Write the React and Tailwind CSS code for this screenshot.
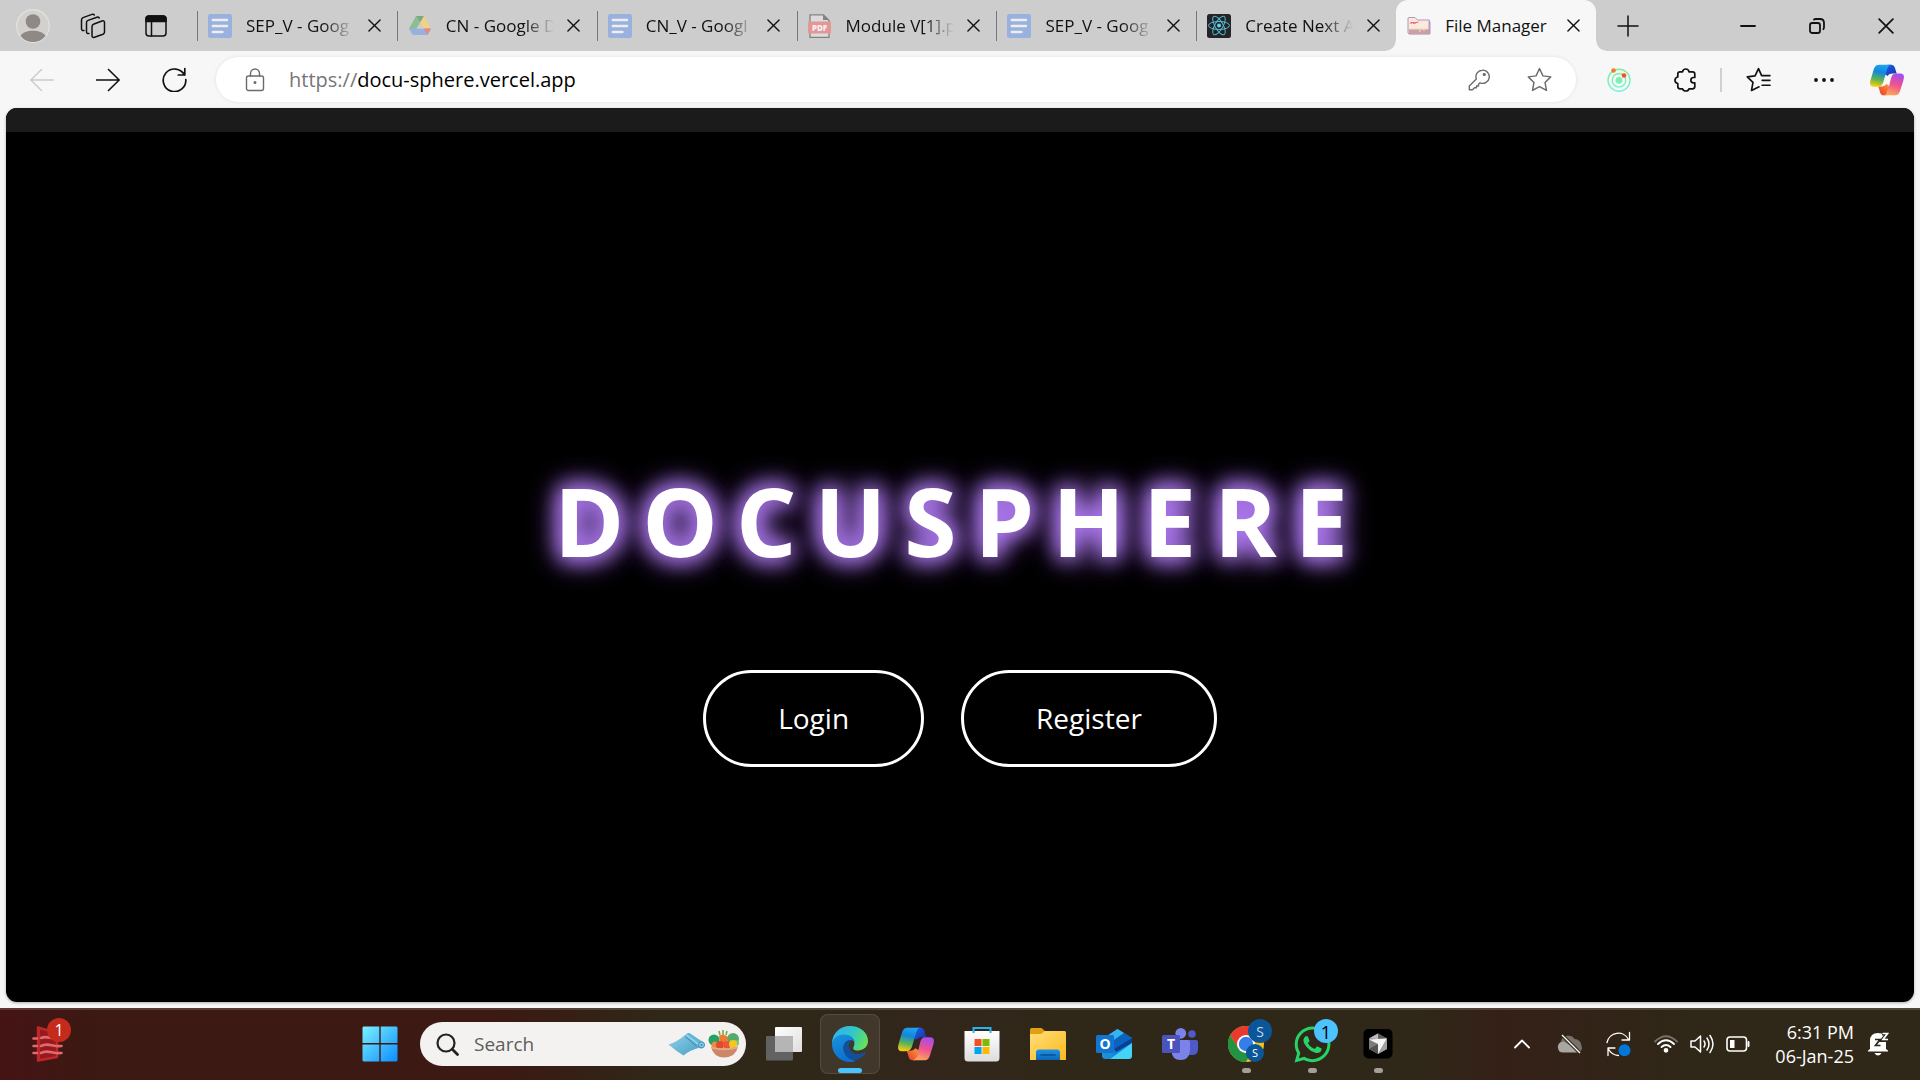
import React from "react";
import { FaWhatsapp } from "react-icons/fa";

const stroke = { fill: "none", stroke: "currentColor", strokeLinecap: "round", strokeLinejoin: "round" };

function DocsIcon() {
  return (
    <svg viewBox="0 0 24 24" className="size-6 shrink-0">
      <rect width="24" height="24" rx="2.5" fill="#98b1de" />
      <path d="M4.8 6H19M4.8 12H19M4.8 18H14.5" stroke="#eeeeee" strokeWidth="2.4" strokeLinecap="round" />
    </svg>
  );
}

function DriveIcon() {
  return (
    <svg viewBox="0 0 24 24" className="size-6 shrink-0">
      <path d="M8 2h8l-4 7-5.500 10H4.600L1 14.500Z" fill="#8ebd94" />
      <path d="M8 2h8l7 12.500h-7.500L12 8.500Z" fill="#f1d283" />
      <path d="M8 2h8l-4 6.500Z" fill="#79a985" />
      <path d="M1 14.500h22L19.600 21H4.600Z" fill="#98b1de" />
      <path d="M15.500 14.500H23L19.600 21Z" fill="#dd8d87" />
      <path d="M12 8.500l3.700 6H8.500Z" fill="#cdcdcd" />
    </svg>
  );
}

function PdfIcon() {
  return (
    <svg viewBox="0 0 24 24" className="size-6 shrink-0">
      <path d="M2 .8h13.500L21 6.500V23.300H2Z" fill="#dcdcdc" stroke="#828282" strokeWidth="1.300" />
      <path d="M15 .8V6h6Z" fill="#828282" />
      <rect x="0" y="7.500" width="23" height="12" rx="1" fill="#e49696" />
      <text x="11.500" y="16.500" textAnchor="middle" fontSize="8" fontWeight="800" fontFamily="Open Sans, sans-serif" fill="#f6f0f0">PDF</text>
    </svg>
  );
}

function ReactIcon() {
  return (
    <svg viewBox="0 0 24 24" className="size-6 shrink-0">
      <rect width="24" height="24" rx="2.500" fill="#222426" />
      <g fill="none" stroke="#58b9d4" strokeWidth="1">
        <ellipse cx="12" cy="11.500" rx="10.500" ry="4" />
        <ellipse cx="12" cy="11.500" rx="10.500" ry="4" transform="rotate(60 12 11.500)" />
        <ellipse cx="12" cy="11.500" rx="10.500" ry="4" transform="rotate(120 12 11.500)" />
      </g>
      <circle cx="12" cy="11.500" r="2" fill="#5fd3f3" />
    </svg>
  );
}

function FolderFavicon() {
  return (
    <svg viewBox="0 0 24 24" className="size-6 shrink-0">
      <path d="M1 19V4.500Q1 3.500 2 3.500H8L10.500 6H22.500V20H2Z" fill="#fbeadb" stroke="#b294c0" strokeWidth="1" />
      <path d="M1.500 15.500H23V20.300H2Z" fill="#c9a0a8" />
      <path d="M21.500 7V20H23.500V8Z" fill="#b79abf" />
      <path d="M1.500 15.300H21.500" stroke="#d9bd9f" />
      <path d="M4 10V8.500H6.500V10M8 10V8.500H9.500L11.500 8" fill="none" stroke="#f0627a" strokeWidth="1.200" />
      <path d="M13 15v3M17 15v2" stroke="#f5dfd2" />
    </svg>
  );
}

const tabs = [
  { title: "SEP_V - Goog", Icon: DocsIcon },
  { title: "CN - Google D", Icon: DriveIcon },
  { title: "CN_V - Googl", Icon: DocsIcon },
  { title: "Module V[1].p", Icon: PdfIcon },
  { title: "SEP_V - Goog", Icon: DocsIcon },
  { title: "Create Next A", Icon: ReactIcon },
  { title: "File Manager", Icon: FolderFavicon, active: true },
];

function Cross({ className }) {
  return (
    <svg viewBox="0 0 14 14" className={className} {...stroke} strokeWidth="1.500">
      <path d="M1 1 13 13M13 1 1 13" />
    </svg>
  );
}

function Tab({ title, Icon, active }) {
  return (
    <div
      className={
        active
          ? "relative flex h-full min-w-0 flex-1 items-center rounded-t-xl bg-[#f7f7f7] pl-[11px]"
          : "relative flex h-full min-w-0 flex-1 items-center pl-[11px]"
      }
    >
      {active ? (
        <>
          <span className="absolute bottom-0 -left-2.5 size-2.5 bg-[radial-gradient(circle_at_0_0,transparent_9px,#f7f7f7_10px)]" />
          <span className="absolute -right-2.5 bottom-0 size-2.5 bg-[radial-gradient(circle_at_100%_0,transparent_9px,#f7f7f7_10px)]" />
        </>
      ) : (
        <span className="absolute top-[11px] left-0 h-[30px] w-px bg-[#777]" />
      )}
      <Icon />
      <a
        href="#tab"
        className={
          active
            ? "ml-3.5 w-[108px] text-[17px] whitespace-nowrap"
            : "ml-3.5 w-[108px] text-[17px] whitespace-nowrap [mask-image:linear-gradient(to_right,black_72%,transparent)]"
        }
      >
        {title}
      </a>
      <button aria-label={"Close " + title} className="ml-2 grid size-6 shrink-0 place-items-center">
        <Cross className="size-[13px]" />
      </button>
    </div>
  );
}

function TabStrip() {
  return (
    <header className="flex h-[51px] items-center bg-[#cdcdcd] text-[#111]">
      <div className="flex w-[197px] shrink-0 items-center">
        <button aria-label="Profile" className="ml-4">
          <svg viewBox="0 0 34 34" className="size-[34px]">
            <circle cx="17" cy="17" r="16.300" fill="#d3d1ce" stroke="#e4e2df" strokeWidth="1.200" />
            <circle cx="17" cy="12.500" r="7.300" fill="#8e8985" />
            <path d="M4.500 27C8 20 26 20 29.500 27A16 16 0 0 1 4.500 27Z" fill="#8e8985" />
          </svg>
        </button>
        <button aria-label="Workspaces" className="ml-[30px]">
          <svg viewBox="0 0 26 26" className="size-[26px]" {...stroke} strokeWidth="1.500">
            <path d="M14 11 22 8q2.500-.7 2.500 1.500V19q0 1.500-1.500 2.200l-8.500 3q-2.500.8-2.500-1.500V13.500Q12 11.700 14 11" />
            <path d="M9 20.500Q6.500 21 6.500 18.500V9.500Q6.500 8 8 7.400L17 4.200q1.500-.4 2.200.8" />
            <path d="M4 17.500Q1.500 18 1.500 15.500V7Q1.500 5.300 3 4.600L12 1.400q1.500-.5 2.300.6" />
          </svg>
        </button>
        <button aria-label="Tab actions" className="ml-[39px]">
          <svg viewBox="0 0 22 22" className="size-[22px]" {...stroke} strokeWidth="1.500">
            <rect x="1" y="1" width="20" height="20" rx="3" />
            <path d="M1 6.500V4q0-3 3-3h14q3 0 3 3v2.500Z" fill="currentColor" />
            <path d="M6.500 7v14" />
          </svg>
        </button>
      </div>
      <nav aria-label="Tabs" className="flex h-full w-[1399px]">
        {tabs.map((t, i) => (
          <Tab key={i} {...t} />
        ))}
      </nav>
      <button aria-label="New tab" className="ml-5 grid size-6 shrink-0 place-items-center">
        <svg viewBox="0 0 22 22" className="size-[22px]" {...stroke} strokeWidth="1.500">
          <path d="M11 1v20M1 11h20" />
        </svg>
      </button>
      <div className="ml-auto flex">
        <button aria-label="Minimize" className="grid h-10 w-[69px] place-items-center">
          <svg viewBox="0 0 16 16" className="size-4" {...stroke} strokeWidth="1.800">
            <path d="M1 8h14" />
          </svg>
        </button>
        <button aria-label="Restore" className="grid h-10 w-[69px] place-items-center">
          <svg viewBox="0 0 16 16" className="size-4" {...stroke} strokeWidth="1.800">
            <rect x="1" y="5" width="10" height="10" rx="2.300" />
            <path d="M5 1.500Q5.500 1 7 1h4q4 0 4 4v4q0 1.500-.7 2.200" />
          </svg>
        </button>
        <button aria-label="Close window" className="grid h-10 w-[69px] place-items-center">
          <Cross className="size-4" />
        </button>
      </div>
    </header>
  );
}

function CopilotIcon({ id, className }) {
  return (
    <svg viewBox="0 0 108 101" className={className}>
      <defs>
        <linearGradient id={id + "a"} x1=".6" y1="0" x2=".4" y2="1">
          <stop offset="0" stopColor="#1ba6f2" />
          <stop offset=".35" stopColor="#1287dc" />
          <stop offset=".7" stopColor="#5fb550" />
          <stop offset="1" stopColor="#f8cb12" />
        </linearGradient>
        <linearGradient id={id + "b"} x1=".7" y1="0" x2=".4" y2="1">
          <stop offset="0" stopColor="#a24df3" />
          <stop offset=".5" stopColor="#ed5290" />
          <stop offset="1" stopColor="#ffa45a" />
        </linearGradient>
        <linearGradient id={id + "c"} x1="0" y1="0" x2="1" y2="1">
          <stop offset="0" stopColor="#1b66e6" />
          <stop offset="1" stopColor="#1a2fae" />
        </linearGradient>
        <linearGradient id={id + "d"} x1="1" y1="0" x2="0" y2="1">
          <stop offset="0" stopColor="#ff9a3c" />
          <stop offset="1" stopColor="#e8392c" />
        </linearGradient>
      </defs>
      <path d="M56 2H66C76 2 79 9 81 18L85 30H74C64 30 60 32 56 38L44 30Z" fill={"url(#" + id + "c)"} />
      <path d="M52 99H44C34 99 32 91 30 82L26 71C40 72 46 70 52 63L64 71L57 84Z" fill={"url(#" + id + "d)"} />
      <path d="M30 2H68C60 2 57 8 54 18L42 58C38 69 34 72 22 72H12C0 72 -2 64 2 50L12 16C16 6 20 2 30 2Z" fill={"url(#" + id + "a)"} />
      <path d="M84 30H96C108 30 110 38 106 52L96 84C92 96 88 99 78 99H42C50 99 54 94 57 84L67 44C70 34 74 30 84 30Z" fill={"url(#" + id + "b)"} />
    </svg>
  );
}

const star = "M12 1.500 15.300 8.500 22.800 9.500 17.300 14.800 18.700 22.500 12 18.800 5.300 22.500 6.700 14.800 1.200 9.500 8.700 8.500Z";

function Toolbar() {
  return (
    <div className="flex h-[57px] items-center bg-[#f7f7f7] text-[#111]">
      <div className="flex w-[216px] shrink-0 items-center pl-[9px]">
        <button aria-label="Back" disabled className="grid w-[66px] place-items-center text-[#cccccc]">
          <svg viewBox="0 0 24 24" className="size-6" {...stroke} strokeWidth="1.500">
            <path d="M23.500 12H.8M11.500 1.500 .8 12l10.700 10.500" />
          </svg>
        </button>
        <button aria-label="Forward" className="grid w-[66px] place-items-center">
          <svg viewBox="0 0 24 24" className="size-6" {...stroke} strokeWidth="1.600">
            <path d="M.5 12H23.200M12.500 1.500 23.200 12 12.500 22.500" />
          </svg>
        </button>
        <button aria-label="Refresh" className="grid w-[66px] place-items-center">
          <svg viewBox="0 0 25 25" className="size-[25px]" {...stroke} strokeWidth="1.700">
            <path d="M22.500 8A11.300 11.300 0 1 0 23.800 12.500M22.800 1.500V8H16.300" />
          </svg>
        </button>
      </div>
      <div className="flex h-[45px] min-w-0 flex-1 items-center rounded-full bg-white pr-6 pl-[29px] shadow-[0_0_4px_rgba(0,0,0,0.09)]">
        <svg viewBox="0 0 20 24" className="h-6 w-5 text-[#6b6b6b]" {...stroke} strokeWidth="1.400">
          <rect x="1.500" y="8" width="17" height="14.500" rx="2" />
          <path d="M5.500 8V5.500a4.500 4.500 0 0 1 9 0V8" />
          <circle cx="10" cy="14.500" r=".8" fill="currentColor" />
        </svg>
        <label htmlFor="url" className="ml-6 text-[20px] text-[#767676]">https://</label>
        <input
          id="url"
          type="text"
          defaultValue="docu-sphere.vercel.app"
          className="min-w-0 flex-1 bg-transparent text-[20px] text-black outline-none"
        />
        <button aria-label="Passwords" className="text-[#6b6b6b]">
          <svg viewBox="0 0 22 22" className="size-[22px]" {...stroke} strokeWidth="1.400">
            <path d="M14 1.200A6.600 6.600 0 1 1 12 13.800L10.500 15.200V17H8.500V18.800H6.500L4.500 20.700H1.300V17L8.300 10A6.600 6.600 0 0 1 14 1.200Z" />
            <circle cx="16.300" cy="5.500" r=".9" fill="currentColor" />
          </svg>
        </button>
        <button aria-label="Add to favorites" className="ml-[37px] text-[#6b6b6b]">
          <svg viewBox="0 0 24 24" className="size-[25px]" {...stroke} strokeWidth="1.400"><path d={star} /></svg>
        </button>
      </div>
      <div className="flex shrink-0 items-center pr-4 pl-[31px]">
        <button aria-label="Orbit extension">
          <svg viewBox="0 0 24 24" className="size-6" fill="none">
            <defs>
              <linearGradient id="orbit" x1="0" y1="0" x2="0" y2="24" gradientUnits="userSpaceOnUse">
                <stop stopColor="#7df18d" />
                <stop offset="1" stopColor="#72f5dd" />
              </linearGradient>
            </defs>
            <circle cx="12" cy="12.300" r="11" stroke="url(#orbit)" strokeWidth="1.400" />
            <circle cx="12" cy="12.300" r="6.800" stroke="url(#orbit)" strokeWidth="1.400" />
            <circle cx="12" cy="12.300" r="3.400" fill="url(#orbit)" />
            <circle cx="6.500" cy="2.500" r="2.300" fill="#f47a31" />
            <circle cx="17" cy="7.500" r="2.300" fill="#f4502b" />
          </svg>
        </button>
        <button aria-label="Extensions" className="ml-[42px]">
          <svg viewBox="0 0 25 24" className="h-6 w-[25px]" {...stroke} strokeWidth="1.700">
            <path d="M9.500 3.800Q10 1 12.800 1T16 3.800H19.500Q21.800 3.800 21.800 6V9.500H20.500A2.600 2.600 0 0 0 20.500 14.800H21.800V18.500Q21.800 20.800 19.500 20.800H16Q15.500 23 12.800 23T9.500 20.800H7Q4.800 20.800 4.800 18.500V15.500Q2 15 2 12.300T4.800 9V6Q4.800 3.800 7 3.800Z" />
          </svg>
        </button>
        <span className="ml-[22px] h-6 w-0.5 bg-[#d0d0d0]" />
        <button aria-label="Favorites" className="ml-6">
          <svg viewBox="0 0 24 24" className="size-[25px]" {...stroke} strokeWidth="1.600">
            <path d="M12.500 19 5.300 22.500 6.700 14.800 1.200 9.500 8.700 8.500 12 1.500 15 8.300H23M15.500 12.800H23M15.500 17.500H23" />
          </svg>
        </button>
        <button aria-label="Settings and more" className="ml-[42px]">
          <svg viewBox="0 0 22 6" className="h-1.5 w-[22px]" fill="currentColor">
            <circle cx="3" cy="3" r="1.900" /><circle cx="11" cy="3" r="1.900" /><circle cx="19" cy="3" r="1.900" />
          </svg>
        </button>
        <button aria-label="Copilot" className="ml-[35px]">
          <CopilotIcon id="ct" className="h-8 w-[34px]" />
        </button>
      </div>
    </div>
  );
}

function Page() {
  return (
    <main className="mx-1.5 mb-1.5 flex min-h-0 flex-1 flex-col overflow-hidden rounded-[11px] bg-black text-white shadow-[0_1px_3px_rgba(0,0,0,0.3)]">
      <div className="h-6 shrink-0 bg-[#1b1b1b]" />
      <div className="flex flex-1 flex-col items-center justify-center pt-[88px]">
        <h1 className="text-[95px] leading-[128px] font-bold tracking-[18px] [text-shadow:0_0_20px_#b17cf3,0_0_25px_#b17cf3,0_0_32px_#a470e6,0_0_50px_rgba(168,85,247,0.2)]">
          DOCUSPHERE
        </h1>
        <div className="mt-[86px] flex gap-[37px]">
          <button className="h-[97px] rounded-full border-[3px] border-white px-[72px] text-[28px]">Login</button>
          <button className="h-[97px] rounded-full border-[3px] border-white px-[72px] text-[28px]">Register</button>
        </div>
      </div>
    </main>
  );
}

function StartIcon() {
  return (
    <svg viewBox="0 0 36 36" className="size-9">
      <defs>
        <linearGradient id="win" x1="0" y1="0" x2="36" y2="36" gradientUnits="userSpaceOnUse">
          <stop stopColor="#7cf3ff" /><stop offset=".5" stopColor="#43bfff" /><stop offset="1" stopColor="#0a8cff" />
        </linearGradient>
      </defs>
      <path d="M1.500.500H17.300V17H.500V1.500Zm17.200 0H34.500L35.500 1.500V17H18.700ZM.500 18.500H17.300V35.500H1.500L.500 34.500Zm18.200 0H35.500V34.500L34.500 35.500H18.700Z" fill="url(#win)" />
    </svg>
  );
}

function WidgetIcon() {
  return (
    <svg viewBox="0 0 32 36" className="h-9 w-8">
      <path d="M6 1.500 25 7V31L6 34.500Z" fill="#931a1d" stroke="#c0272a" strokeWidth="2.500" strokeLinejoin="round" />
      <path d="M6.500 1V35" stroke="#c0272a" strokeWidth="3" />
      <path d="M1.500 12.500H5M9 12C15 9 20 14 26 12M1.500 20H5M9 20C16 16 20 21 29.500 20M1.500 27H5M9 27C16 23 20 28 29.500 27" fill="none" stroke="#e2686d" strokeWidth="2.600" strokeLinecap="round" />
    </svg>
  );
}

function MatIcon() {
  return (
    <svg viewBox="0 0 38 24" className="h-6 w-[38px] shrink-0">
      <defs>
        <linearGradient id="mat" x1="0" y1="0" x2="1" y2="1"><stop stopColor="#8fd0e8" /><stop offset="1" stopColor="#4a9fc4" /></linearGradient>
      </defs>
      <path d="M.500 12.500Q9 10 17 3L32 15.500Q22 18 15.500 23.500Q8 19 .500 12.500Z" fill="url(#mat)" />
      <path d="M17 3.500Q18 .500 21.500 1L35 10Q38 13 35 16Q32 17.500 30 15Z" fill="#62b4d6" />
      <path d="M18 2.500 31.500 13" stroke="#9bd8ec" strokeWidth="1.500" />
      <path d="M17 4.500 29 14.500" stroke="#3c8bb0" strokeWidth="1" />
      <circle cx="33.500" cy="12.800" r="3" fill="#8ccbe4" stroke="#3d8fb5" />
      <circle cx="33.500" cy="12.800" r=".9" fill="#2f7899" />
    </svg>
  );
}

function BasketIcon() {
  return (
    <svg viewBox="0 0 32 28" className="ml-0.5 h-7 w-8 shrink-0">
      <circle cx="6" cy="10" r="5.500" fill="#21a366" />
      <circle cx="25" cy="9" r="6" fill="#55ab6b" />
      <circle cx="28" cy="13" r="3" fill="#7cc17e" />
      <path d="M11 6Q15 3 20 7L18 15H12Z" fill="#ef7a30" />
      <path d="M12 5 11 1M15 5V0M18 5 19 1" stroke="#7aa844" strokeWidth="1.600" />
      <circle cx="7" cy="15" r="3.500" fill="#f08a3d" />
      <circle cx="12" cy="15" r="4" fill="#e14b32" />
      <circle cx="19" cy="15" r="4" fill="#ea5736" />
      <circle cx="25" cy="14" r="4" fill="#f3c81e" />
      <path d="M3 16.500Q16 20.500 30 16.500Q28 27 16 27.500Q5 27 3 16.500Z" fill="#cb8766" />
      <path d="M3 16.500Q16 20.500 30 16.500L29.500 18.500Q16 22 3.500 18.500Z" fill="#e5ab89" />
    </svg>
  );
}

function TaskViewIcon() {
  return (
    <svg viewBox="0 0 36 36" className="size-9">
      <defs>
        <linearGradient id="tv" x1="0" y1="0" x2="1" y2="1"><stop stopColor="#fff" /><stop offset="1" stopColor="#dedede" /></linearGradient>
      </defs>
      <rect x="9" y="1" width="27" height="25" rx="1" fill="url(#tv)" />
      <rect y="10" width="27" height="24.500" rx="1" fill="#626262" />
      <rect x="9" y="10" width="18" height="16" fill="#b5b5b5" />
    </svg>
  );
}

function EdgeIcon() {
  return (
    <svg viewBox="0 0 36 36" className="size-9">
      <defs>
        <linearGradient id="e1" x1="0" y1="4" x2="36" y2="20" gradientUnits="userSpaceOnUse">
          <stop stopColor="#2fb2f3" /><stop offset=".5" stopColor="#31c6c9" /><stop offset="1" stopColor="#6de64a" />
        </linearGradient>
        <linearGradient id="e2" x1="0" y1="10" x2="10" y2="36" gradientUnits="userSpaceOnUse">
          <stop stopColor="#1793dd" /><stop offset="1" stopColor="#0c6fcf" />
        </linearGradient>
      </defs>
      <path d="M0 18C0 7 8 0 18 0C29 0 36 7 36 15C36 21 31 24.500 26 24.500C22 24.500 20.500 23 21.500 21C24 18 22 9 12 9C5 9 1 13 0 18Z" fill="url(#e1)" />
      <path d="M0 18C1 12 6 8.500 12 8.500C18 8.500 22 12 23 16C21 14 18 13.500 15 15C10 18 10 27 17 32C20 34 23 35 25 34.500C22 35.700 20 36 18 36C8 36 0 28 0 18Z" fill="url(#e2)" />
      <path d="M17 14.300C10 17 9.500 26 15.500 31C21 36 28 34 33.500 27.500C34 26.500 33.500 26 32.500 26.500C25 30 17 27 17 20C17 17 18 15 20 14.300Q18.500 13.800 17 14.300Z" fill="#10509c" />
    </svg>
  );
}

function StoreIcon() {
  return (
    <svg viewBox="0 0 36 36" className="size-9">
      <defs><linearGradient id="st" x1="0" y1="0" x2="0" y2="1"><stop stopColor="#fff" /><stop offset="1" stopColor="#dcdcdc" /></linearGradient></defs>
      <path d="M.500 5H35.500V32Q35.500 35.500 32 35.500H4Q.500 35.500 .500 32Z" fill="url(#st)" />
      <path d="M9.500 7V2H26.500V7" fill="none" stroke="#27b3ee" strokeWidth="2" />
      <path d="M10.500 13h7v7h-7Z" fill="#f25022" /><path d="M18.500 13h7v7h-7Z" fill="#7fba00" />
      <path d="M10.500 21h7v7h-7Z" fill="#00a4ef" /><path d="M18.500 21h7v7h-7Z" fill="#ffb900" />
    </svg>
  );
}

function ExplorerIcon() {
  return (
    <svg viewBox="0 0 36 36" className="size-9">
      <defs>
        <linearGradient id="ex" x1="0" y1="0" x2="1" y2="1"><stop stopColor="#ffde7a" /><stop offset="1" stopColor="#fbb91c" /></linearGradient>
        <linearGradient id="ex2" x1="0" y1="0" x2="0" y2="1"><stop stopColor="#1f93e4" /><stop offset="1" stopColor="#0c66b8" /></linearGradient>
      </defs>
      <path d="M0 3.500Q0 2 1.500 2H11.500L15 5V10H0Z" fill="#e0a012" />
      <path d="M0 8H11L15 5H34.500Q36 5 36 6.500V34H0Z" fill="url(#ex)" />
      <path d="M6 34V26.500Q6 23.500 9 23.500H27Q30 23.500 30 26.500V34Z" fill="url(#ex2)" />
      <path d="M11 29H25" stroke="#0b4f94" strokeWidth="1.600" strokeLinecap="round" />
    </svg>
  );
}

function OutlookIcon() {
  return (
    <svg viewBox="0 0 36 36" className="size-9">
      <path d="M6 13 21.500 3 36 12V29.500Q36 33 32.500 33H10Q6 33 6 29.500Z" fill="#1683d8" />
      <path d="M8 12 21.500 3 28 7 14 17Z" fill="#35b4ef" />
      <path d="M28 7 36 12 18 23V14Z" fill="#0b63bf" />
      <path d="M36 12V17L20 26 18 23Z" fill="#083f91" />
      <path d="M36 17V29.500Q36 33 32.500 33H14Z" fill="#43d3f7" />
      <path d="M6 25 18 28 14 33H10Q6 33 6 29Z" fill="#1d8ed9" />
      <rect y="9" width="18" height="18" rx="1.500" fill="#1175d1" />
      <text x="9" y="23" textAnchor="middle" fontSize="14" fontWeight="700" fontFamily="Open Sans, sans-serif" fill="#fff">O</text>
    </svg>
  );
}

function TeamsIcon() {
  return (
    <svg viewBox="0 0 36 36" className="size-9">
      <circle cx="30" cy="8" r="3.800" fill="#5059c9" />
      <path d="M24 14H34Q36 14 36 16V23Q36 29 30 29H24Z" fill="#5059c9" />
      <circle cx="18.800" cy="7.300" r="5.400" fill="#7b83eb" />
      <path d="M10 14H26Q28 14 28 16V25Q27 34 18.500 34T9.500 25Z" fill="#7b83eb" />
      <rect y="9" width="18" height="18" rx="1.500" fill="#4b53bc" />
      <text x="9" y="23" textAnchor="middle" fontSize="14" fontWeight="700" fontFamily="Open Sans, sans-serif" fill="#fff">T</text>
    </svg>
  );
}

function ChromeIcon() {
  return (
    <svg viewBox="0 0 36 36" className="size-9">
      <circle cx="18" cy="18" r="18" fill="#fbc116" />
      <path d="M2.400 9A18 18 0 0 0 18 36L25.500 22.500 18 18 10.500 22.500Z" fill="#229342" />
      <path d="M2.400 9 10.500 22.500 18 9.500H33.900L33.600 9A18 18 0 0 0 2.400 9Z" fill="#e83b2e" />
      <circle cx="18" cy="18" r="9" fill="#fff" />
      <circle cx="18" cy="18" r="7.200" fill="#357ee9" />
    </svg>
  );
}

function CursorIcon() {
  return (
    <svg viewBox="0 0 36 36" className="size-9">
      <rect x="3.500" y="3" width="29" height="29.500" rx="5" fill="#000" />
      <path d="M18 7.500 27 12.500V23L18 28 9 23V12.500Z" fill="#7d7d7d" />
      <path d="M18 7.500 27 12.500H9Z" fill="#5d5d5d" />
      <path d="M9 13.500 27 12.500 18 28V18Z" fill="#f4f4f4" />
      <path d="M27 12.500V23L18 28Z" fill="#a0a0a0" />
      <path d="M9 23 18 18V28Z" fill="#555555" />
      <path d="M18 7.500V13L9 12.500Z" fill="#bdbdbd" />
    </svg>
  );
}

const apps = [
  { name: "Task view", icon: <TaskViewIcon /> },
  { name: "Microsoft Edge", icon: <EdgeIcon />, active: true },
  { name: "Copilot app", icon: <CopilotIcon id="cb" className="h-[34px] w-9" /> },
  { name: "Microsoft Store", icon: <StoreIcon /> },
  { name: "File Explorer", icon: <ExplorerIcon /> },
  { name: "Outlook", icon: <OutlookIcon /> },
  { name: "Teams", icon: <TeamsIcon /> },
  { name: "Chrome", icon: <ChromeIcon />, running: true, profile: "S" },
  { name: "WhatsApp", icon: <FaWhatsapp className="size-[41px] text-[#25d366]" />, running: true, count: "1" },
  { name: "Cursor", icon: <CursorIcon />, running: true },
];

function AppButton({ name, icon, active, running, profile, count }) {
  return (
    <button
      aria-label={name}
      className={
        active
          ? "relative grid size-[60px] place-items-center rounded-lg border border-white/10 bg-white/8"
          : "relative grid size-[60px] place-items-center"
      }
    >
      {icon}
      {active && <span className="absolute bottom-0 h-[5px] w-6 rounded-full bg-[#4cc2ff]" />}
      {running && <span className="absolute bottom-px h-[5px] w-[9px] rounded-full bg-[#a39e97]" />}
      {profile && (
        <>
          <span className="absolute top-[5px] right-1 grid size-6 place-items-center rounded-full bg-[#0b5599] text-[14px] text-[#c3d9ec]">{profile}</span>
          <span className="absolute right-3 bottom-3 grid size-[18px] place-items-center rounded-full bg-[#0b5599] text-[11px] text-white">{profile}</span>
        </>
      )}
      {count && (
        <span className="absolute top-[5px] right-1 grid size-6 place-items-center rounded-full bg-[#4cc2ff] text-[18px] text-black">{count}</span>
      )}
    </button>
  );
}

function Tray() {
  return (
    <div className="ml-auto flex items-center text-white">
      <button aria-label="Show hidden icons" className="grid w-12 place-items-center">
        <svg viewBox="0 0 16 10" className="h-2.5 w-4" {...stroke} strokeWidth="1.800"><path d="M1 8.500 8 1.500 15 8.500" /></svg>
      </button>
      <button aria-label="OneDrive" className="grid w-12 place-items-center">
        <svg viewBox="0 0 26 22" className="h-[22px] w-[26px]">
          <path d="M6 17.500A5 5 0 0 1 4 8.500 7.500 7.500 0 0 1 17.500 6 7 7 0 0 1 24.500 13 4 4 0 0 1 21 19H6Z" fill="#77716a" />
          <path d="M1 15A5 5 0 0 1 9 10L24 18Q23 19.500 21 19.500H6Q1.500 19.500 1 15Z" fill="#aaa6a0" />
          <path d="M5 2 23 20" stroke="#33261a" strokeWidth="3.500" /><path d="M5 2 23 20" stroke="#fff" strokeWidth="1.300" />
        </svg>
      </button>
      <button aria-label="Windows Update" className="grid w-12 place-items-center">
        <svg viewBox="0 0 25 26" className="h-[26px] w-[25px]" {...stroke} strokeWidth="1.300">
          <path d="M1 11.500A11.500 11.500 0 0 1 22.500 8.500M23.500 1.500V9H16M2 24.500V17H9M2 17.500Q6 24.500 12.500 24.500" />
          <circle cx="18.500" cy="19.300" r="6" fill="#0078d7" stroke="none" />
        </svg>
      </button>
      <button aria-label="Network, volume and battery" className="flex w-[108px] items-center justify-end gap-3">
        <svg viewBox="0 0 24 18" className="h-[18px] w-6" {...stroke} strokeWidth="1.900">
          <path d="M1 6.500Q12-4 23 6.500" opacity=".35" />
          <path d="M4 9Q12 1.500 20 9M7.500 12Q12 8 16.500 12" /><circle cx="12" cy="15.300" r="1.400" fill="currentColor" />
        </svg>
        <svg viewBox="0 0 24 20" className="h-5 w-6" {...stroke} strokeWidth="1.500">
          <path d="M1 7V13H5L10.500 18V2L5 7ZM14 7Q16 10 14 13M17 4Q21 10 17 16M20 1.500Q26 10 20 18.500" />
        </svg>
        <svg viewBox="0 0 24 16" className="h-4 w-6" {...stroke} strokeWidth="1.600">
          <rect x="1" y="1" width="19.500" height="14" rx="3" /><path d="M22.500 6v4" strokeWidth="2" /><rect x="4" y="4" width="4.500" height="8" fill="currentColor" stroke="none" />
        </svg>
      </button>
      <button className="flex items-center gap-3.5 pr-[31px] pl-[25px] text-right text-[18px] leading-6">
        <span>
          <time className="block">6:31 PM</time>
          <time className="block">06-Jan-25</time>
        </span>
        <svg viewBox="0 0 21 24" className="h-6 w-[21px]">
          <path d="M2 17V9Q2 1 10 1T18 9V17L20 18.500V19.500H0V18.500ZM6.500 21H13.500Q12 23.500 10 23.500T6.500 21Z" fill="#fff" />
          <path d="M7 7.500H12L7.500 13.500H12.500" fill="none" stroke="#2f2719" strokeWidth="1.700" />
          <path d="M14 1.500H20L14.500 8H20" fill="none" stroke="#2f2719" strokeWidth="4" />
          <path d="M14.500 1.500H19.500L15 7.500H20" fill="none" stroke="#fff" strokeWidth="1.700" />
        </svg>
      </button>
    </div>
  );
}

function Taskbar() {
  return (
    <footer className="flex h-[72px] shrink-0 items-center border-t-2 border-white/15 bg-[linear-gradient(to_right,#451414_0%,#3c1913_5%,#3c1913_26%,#2f2718_34%,#2f2718_43%,#33261c_48%,#2f2718_55%,#2f2718_74%,#352017_78%,#2f2718_88%,#2f2718_100%)] bg-origin-border pb-0.5">
      <button aria-label="Widgets" className="relative ml-8">
        <WidgetIcon />
        <span className="absolute -top-2 left-[15px] grid size-6 place-items-center rounded-full bg-[#c42b1c] text-[16px] text-white">1</span>
      </button>
      <button aria-label="Start" className="ml-[298px]">
        <StartIcon />
      </button>
      <label className="ml-[22px] flex h-11 w-[326px] items-center rounded-full bg-[#f3f2f1] pr-1.5 pl-4">
        <svg viewBox="0 0 23 23" className="size-[23px] shrink-0 text-[#222]" {...stroke} strokeWidth="2.200">
          <circle cx="10" cy="10" r="8.500" /><path d="M16.500 16.500 21.500 21.500" strokeWidth="2.800" />
        </svg>
        <input type="search" aria-label="Search" placeholder="Search" className="ml-[15px] min-w-0 flex-1 bg-transparent text-[19px] text-black outline-none placeholder:text-[#5d5d5d]" />
        <MatIcon />
        <BasketIcon />
      </label>
      <div className="ml-2 flex gap-1.5">
        {apps.map((a) => (
          <AppButton key={a.name} {...a} />
        ))}
      </div>
      <Tray />
    </footer>
  );
}

export default function App() {
  return (
    <div className="flex h-screen flex-col overflow-hidden bg-[#f7f7f7] font-['Open_Sans','Noto_Sans',sans-serif]">
      <TabStrip />
      <Toolbar />
      <Page />
      <Taskbar />
    </div>
  );
}
